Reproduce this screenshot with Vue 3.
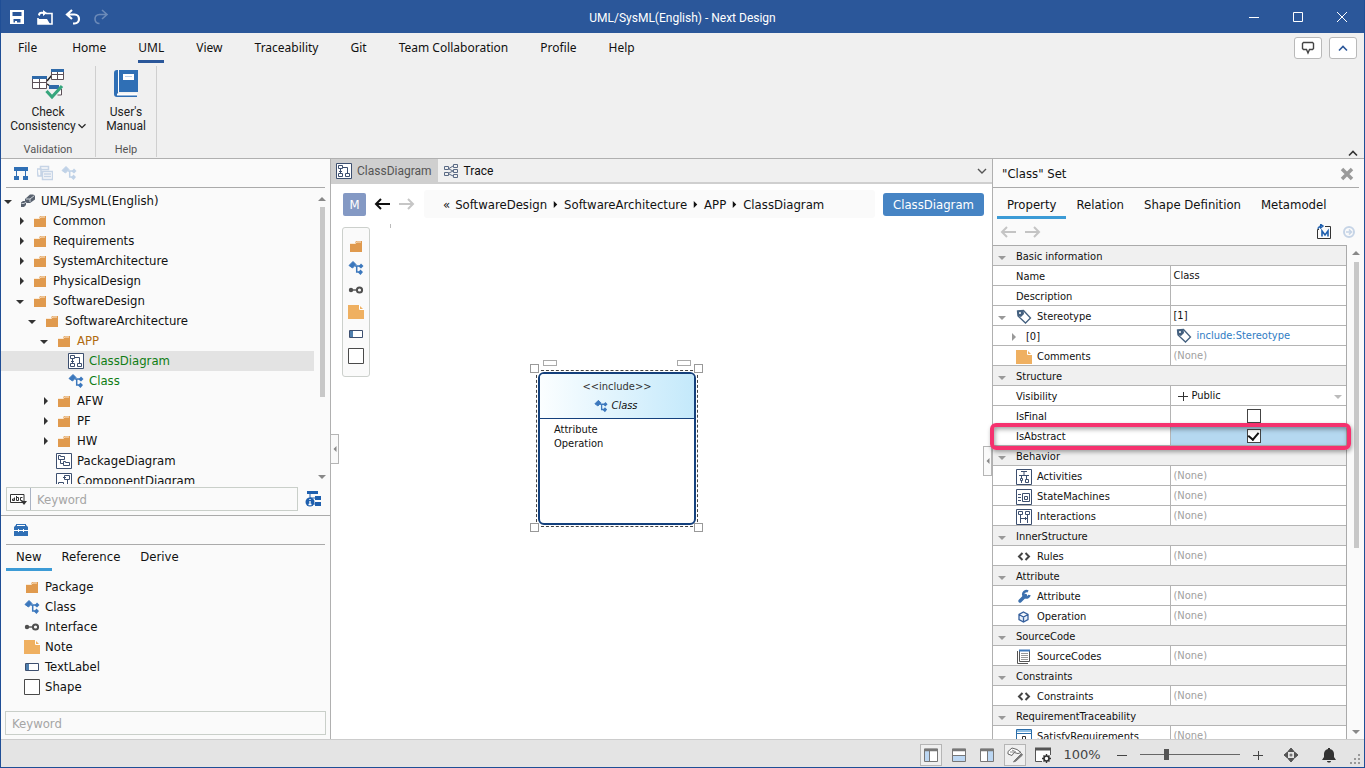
<script setup>
import { ref } from 'vue'

const menus = ['File', 'Home', 'UML', 'View', 'Traceability', 'Git', 'Team Collaboration', 'Profile', 'Help']

const tree = [
  { level: 0, open: true, icon: 'model', label: 'UML/SysML(English)' },
  { level: 1, open: false, icon: 'folder', label: 'Common' },
  { level: 1, open: false, icon: 'folder', label: 'Requirements' },
  { level: 1, open: false, icon: 'folder', label: 'SystemArchitecture' },
  { level: 1, open: false, icon: 'folder', label: 'PhysicalDesign' },
  { level: 1, open: true, icon: 'folder', label: 'SoftwareDesign' },
  { level: 2, open: true, icon: 'folder', label: 'SoftwareArchitecture' },
  { level: 3, open: true, icon: 'folder', label: 'APP', tone: 'brown' },
  { level: 4, icon: 'classdiagram', label: 'ClassDiagram', tone: 'green', selected: true },
  { level: 4, icon: 'class', label: 'Class', tone: 'green' },
  { level: 3, open: false, icon: 'folder', label: 'AFW' },
  { level: 3, open: false, icon: 'folder', label: 'PF' },
  { level: 3, open: false, icon: 'folder', label: 'HW' },
  { level: 3, icon: 'packagediagram', label: 'PackageDiagram' },
  { level: 3, icon: 'componentdiagram', label: 'ComponentDiagram' }
]

const shapes = [
  { icon: 'folder', label: 'Package' },
  { icon: 'class', label: 'Class' },
  { icon: 'interface', label: 'Interface' },
  { icon: 'note', label: 'Note' },
  { icon: 'textlabel', label: 'TextLabel' },
  { icon: 'shape', label: 'Shape' }
]

const crumbs = ['SoftwareDesign', 'SoftwareArchitecture', 'APP', 'ClassDiagram']
const propTabs = ['Property', 'Relation', 'Shape Definition', 'Metamodel']

const props = ref([
  { kind: 'section', label: 'Basic information' },
  { kind: 'text', label: 'Name', value: 'Class' },
  { kind: 'text', label: 'Description', value: '' },
  { kind: 'text', label: 'Stereotype', icon: 'tag', value: '[1]', expander: 'down' },
  { kind: 'link', label: '[0]', value: 'include:Stereotype', expander: 'right' },
  { kind: 'none', label: 'Comments', icon: 'note' },
  { kind: 'section', label: 'Structure' },
  { kind: 'select', label: 'Visibility', id: 'visibility' },
  { kind: 'check', label: 'IsFinal', id: 'is-final', value: false },
  { kind: 'check', label: 'IsAbstract', id: 'is-abstract', value: true, active: true },
  { kind: 'section', label: 'Behavior' },
  { kind: 'none', label: 'Activities', icon: 'activity' },
  { kind: 'none', label: 'StateMachines', icon: 'state' },
  { kind: 'none', label: 'Interactions', icon: 'interaction' },
  { kind: 'section', label: 'InnerStructure' },
  { kind: 'none', label: 'Rules', icon: 'code' },
  { kind: 'section', label: 'Attribute' },
  { kind: 'none', label: 'Attribute', icon: 'wrench' },
  { kind: 'none', label: 'Operation', icon: 'cube' },
  { kind: 'section', label: 'SourceCode' },
  { kind: 'none', label: 'SourceCodes', icon: 'source' },
  { kind: 'section', label: 'Constraints' },
  { kind: 'none', label: 'Constraints', icon: 'code' },
  { kind: 'section', label: 'RequirementTraceability' },
  { kind: 'none', label: 'SatisfyRequirements', icon: 'requirement' }
])

const zoom = ref(25)
</script>

<template>
  <svg class="sprite" aria-hidden="true">
    <symbol id="folder" viewBox="0 0 16 16">
      <path d="M2 5h5l1-2h6v11H2z" fill="#e09a4e" /><path d="M2 5.500h5.500l1-1.500H13" fill="none" stroke="#fbead6" />
    </symbol>
    <symbol id="class" viewBox="0 0 16 16">
      <path d="M5 1.500 8 4.500 4.500 8 1 5.500z" fill="#3c78bd" stroke="#3c78bd" />
      <path d="M7 6h6M8.700 6v6h3" fill="none" stroke="#3c78bd" stroke-width="1.500" />
      <path d="M13 3.500 15.500 6 13 8.500 10.500 6.500zM12.500 9.500 15 12 12.500 15 10 12.500z" fill="#3c78bd" />
    </symbol>
    <symbol id="interface" viewBox="0 0 16 16">
      <circle cx="3" cy="8" r="2.200" fill="#4f4f4f" /><path d="M4 8h5" stroke="#4f4f4f" stroke-width="1.400" />
      <circle cx="11.500" cy="8" r="2.600" fill="none" stroke="#4f4f4f" stroke-width="2" />
    </symbol>
    <symbol id="note" viewBox="0 0 16 16">
      <path d="M0 1h11l5 5v9H0z" fill="#efb061" /><path d="M11.500 1v4.500H16" fill="none" stroke="#fff" />
    </symbol>
    <symbol id="textlabel" viewBox="0 0 16 16">
      <path d="M1.500 4.500h13v7h-13z" fill="#fff" stroke="#3d4f6f" /><path d="M2 5h3v6H2z" fill="#4f7fae" />
    </symbol>
    <symbol id="shape" viewBox="0 0 16 16"><path d="M.5.5h15v15H.5z" fill="#fff" stroke="#4a4a4a" /></symbol>
    <symbol id="model" viewBox="0 0 16 16">
      <path d="M5 6 10 1.500h3l2 1v4L10 10H7L5 9z" fill="#59626f" /><path d="M6 6h4l4.500-3.500M10 6v3" fill="none" stroke="#cdd2d9" />
      <path d="M1 9.500 3 8h3v4l-2 2H1z" fill="#59626f" /><path d="M1.500 10.500h2.500L6 9" fill="none" stroke="#cdd2d9" />
    </symbol>
    <symbol id="classdiagram" viewBox="0 0 16 16">
      <path d="M.5.5h15v15H.5z" fill="#fff" stroke="#3d4f6f" />
      <path d="M2.500 2.500h4v3h-4zM2.500 10.500h4v3h-4zM9.500 10.500h4v3h-4zM4.500 6v4M7 4.500h4.500v6M3 8.500h3" fill="none" stroke="#3d4f6f" />
    </symbol>
    <symbol id="packagediagram" viewBox="0 0 16 16">
      <path d="M.5.5h15v15H.5z" fill="#fff" stroke="#3d4f6f" />
      <path d="M2.500 6.500v-4h2v1h4v3zM7.500 12.500v-4h2v1h4v3zM4.500 7v3.500h3" fill="none" stroke="#3d4f6f" />
    </symbol>
    <symbol id="componentdiagram" viewBox="0 0 16 16">
      <path d="M.5.5h15v15H.5z" fill="#fff" stroke="#3d4f6f" />
      <path d="M8.500 2.500h5v4h-5zM7 4.500h3M11.500 7v4.500H8M2.500 9.500h5v4h-5z" fill="none" stroke="#3d4f6f" />
    </symbol>
    <symbol id="activity" viewBox="0 0 16 16">
      <path d="M.5.5h15v15H.5z" fill="#fff" stroke="#3d4f6f" />
      <path d="M5 2.500h6M3 6.500h10M8 3v3M5.500 7v2M10.500 7v3M4.500 9.500h2v2h-2zM9.500 10.500h3v3h-3zM5.500 12v2" fill="none" stroke="#3d4f6f" />
    </symbol>
    <symbol id="state" viewBox="0 0 16 16">
      <path d="M.5.5h15v15H.5z" fill="#fff" stroke="#3d4f6f" />
      <path d="M2 5.500h3M2 8.500h3M2 11.500h3M6.500 4.500h7v8h-7zM8.500 7.500h3v3h-3z" fill="none" stroke="#3d4f6f" />
    </symbol>
    <symbol id="interaction" viewBox="0 0 16 16">
      <path d="M.5.5h15v15H.5z" fill="#fff" stroke="#3d4f6f" />
      <path d="M2.500 2.500h4v3h-4zM9.500 2.500h4v3h-4zM4.500 6v8M11.500 6v8M5 9.500h6M9.500 8v3" fill="none" stroke="#3d4f6f" />
    </symbol>
    <symbol id="code" viewBox="0 0 16 16"><path d="M6.500 4 3 7.500 6.500 11M9.500 4 13 7.500 9.500 11" fill="none" stroke="#444" stroke-width="2" /></symbol>
    <symbol id="wrench" viewBox="0 0 16 16">
      <path d="M4 12 9.500 6.500" stroke="#3c70ae" stroke-width="3.500" stroke-linecap="round" />
      <path d="M12 2.500A3.200 3.200 0 1 0 13.500 6" fill="none" stroke="#3c70ae" stroke-width="2.500" />
    </symbol>
    <symbol id="cube" viewBox="0 0 16 16">
      <path d="M7.500 3 12 5.500v5L7.500 13 3 10.500v-5zM3 5.500 7.500 8 12 5.500M7.500 8v5" fill="#e7effa" stroke="#355f9c" stroke-width="1.300" />
    </symbol>
    <symbol id="source" viewBox="0 0 16 16">
      <path d="M3.500 1.500h10v11h-10z" fill="#fff" stroke="#555" /><path d="M1.500 2v12.500H12" fill="none" stroke="#555" />
      <path d="M3 1.500h11" stroke="#3c78bd" stroke-width="2" /><path d="M5 4.500h7M5 6.500h7M5 8.500h7M5 10.500h7" stroke="#999" />
    </symbol>
    <symbol id="requirement" viewBox="0 0 16 16">
      <path d="M.5.5h15v15H.5z" fill="#fff" stroke="#2b6ca8" /><path d="M1 1h14v2H1z" fill="#8fc0e6" /><path d="M0 4.500h16" stroke="#2b6ca8" />
      <path d="M6.500 13V7.500h3v3h-3" fill="none" stroke="#333" />
    </symbol>
    <symbol id="tag" viewBox="0 0 16 16">
      <path d="M1.500 2 7.500 1.500 14.500 9 9.500 14 2 7z" fill="#fff" stroke="#44607f" stroke-width="1.300" />
      <path d="M1.500 2 7.500 1.500 8 5 5 8 2 7z" fill="#44607f" /><circle cx="4" cy="4" r="1" fill="#fff" />
    </symbol>
    <symbol id="left" viewBox="0 0 16 16"><path d="M7 3 2 8l5 5M2 8h14" fill="none" stroke="currentColor" stroke-width="2" /></symbol>
    <symbol id="right" viewBox="0 0 16 16"><path d="M9 3l5 5-5 5M14 8H0" fill="none" stroke="currentColor" stroke-width="2" /></symbol>
    <symbol id="chev-up" viewBox="0 0 16 16"><path d="M4 10.500 8 6.500l4 4" fill="none" stroke="currentColor" stroke-width="1.600" /></symbol>
    <symbol id="chev-down" viewBox="0 0 16 16"><path d="M4 6 8 10l4-4" fill="none" stroke="currentColor" stroke-width="1.400" /></symbol>
    <symbol id="tri-up" viewBox="0 0 8 8"><path d="M0 6 4 2l4 4z" fill="currentColor" /></symbol>
    <symbol id="tri-down" viewBox="0 0 8 8"><path d="M0 3h8L4 7z" fill="currentColor" /></symbol>
    <symbol id="tri-right" viewBox="0 0 8 8"><path d="M2 0 6 4 2 8z" fill="currentColor" /></symbol>
    <symbol id="tri-left" viewBox="0 0 8 8"><path d="M6 0 2 4l4 4z" fill="currentColor" /></symbol>
    <symbol id="sidebar" viewBox="0 0 16 16"><path d="M1.500 2h13v12.500h-13z" fill="#fff" stroke="#777" /><path d="M2 4h4v10H2z" fill="#bcd7f3" /><path d="M1 3h14" stroke="#777" stroke-width="2.500" /><path d="M6.500 4v10" stroke="#777" /></symbol>
    <symbol id="bottombar" viewBox="0 0 16 16"><path d="M1.500 2h13v12.500h-13z" fill="#fff" stroke="#777" /><path d="M2 9h12v5H2z" fill="#bcd7f3" /><path d="M1 3h14" stroke="#777" stroke-width="2.500" /><path d="M2 8.500h12" stroke="#777" /></symbol>
    <symbol id="rightbar" viewBox="0 0 16 16"><path d="M1.500 2h13v12.500h-13z" fill="#fff" stroke="#777" /><path d="M9 4h5v10H9z" fill="#bcd7f3" /><path d="M1 3h14" stroke="#777" stroke-width="2.500" /><path d="M8.500 4v10" stroke="#777" /></symbol>
  </svg>

  <div class="window">
    <header class="title">
      <div class="quick">
        <button aria-label="Save"><svg viewBox="0 0 16 16"><path d="M1 1h14v14H1zM3.500 3v4h9V3zM4.500 10v3.500h7V10z" fill="#fff" fill-rule="evenodd" /><path d="M6 12h2v3H6z" fill="#fff" /></svg></button>
        <button aria-label="Open"><svg viewBox="0 0 16 16"><path d="M1 9v6h14V4.500H9" fill="none" stroke="#fff" stroke-width="1.600" /><path d="M1 10h9l3 5H1z" fill="#fff" /><path d="M1 6c0-3 3-4 5-3V1l4 3-4 3V5C4 4.500 3 5 3 7z" fill="#fff" /></svg></button>
        <button aria-label="Undo"><svg viewBox="0 0 16 16"><path d="M7 1 2 5.500 7 10M2 5.500h7.500c6 0 6 9 0 9H8" fill="none" stroke="#fff" stroke-width="2.200" /></svg></button>
        <button aria-label="Redo" class="faded"><svg viewBox="0 0 16 16"><path d="M9 1l5 4.500L9 10M14 5.500H6.500c-6 0-6 9 0 9" fill="none" stroke="#fff" stroke-width="1.600" /></svg></button>
      </div>
      <h1>UML/SysML(English) - Next Design</h1>
      <div class="winbtns">
        <button aria-label="Minimize"><svg viewBox="0 0 16 16"><path d="M3 8.500h10" stroke="#fff" /></svg></button>
        <button aria-label="Maximize"><svg viewBox="0 0 16 16"><path d="M3.500 3.500h9v9h-9z" fill="none" stroke="#fff" /></svg></button>
        <button aria-label="Close"><svg viewBox="0 0 16 16"><path d="m3 3 10 10M13 3 3 13" stroke="#fff" /></svg></button>
      </div>
    </header>

    <section class="ribbon">
      <nav class="menu">
        <button v-for="m in menus" :key="m" :class="{ on: m === 'UML' }">{{ m }}</button>
        <span class="grow"></span>
        <button class="box" aria-label="Feedback"><svg viewBox="0 0 16 16"><path d="M3.500 2.500h9l1 1v5l-1 1H9.500L8 13 6.500 9.500h-3l-1-1v-5z" fill="none" stroke="#444" stroke-width="1.400" /></svg></button>
        <button class="box blue" aria-label="Collapse"><svg><use href="#chev-up" /></svg></button>
      </nav>
      <div class="groups">
        <div class="group wide">
          <button class="tool">
            <svg viewBox="0 0 32 32">
              <path d="m15 13 5-6M15 16l6 4" stroke="#222" stroke-width="1.400" />
              <path d="M.5 8.500h14v12H.5zM.5 14.500h14M7.500 10v10M19.500 1.500h12v10h-12zM19.500 6.500h12M25.500 3v8M29.500 21v6h-4" fill="#fff" stroke="#5c5058" />
              <path d="M0 8h15v3H0zM19 1h13v3H19zM17 17h10v4H17z" fill="#2f6aa9" />
              <path d="m14.500 23 5.500 6 10-11" fill="none" stroke="#36a57c" stroke-width="3.200" />
            </svg>
            <span>Check</span>
            <span class="withchev">Consistency<svg><use href="#chev-down" /></svg></span>
          </button>
          <small>Validation</small>
        </div>
        <div class="group">
          <button class="tool">
            <svg viewBox="0 0 32 32">
              <path d="M4 5a3 3 0 0 1 3-3h21v22H8v3h19v2H7a3 3 0 0 1-3-3z" fill="#2f6fb5" /><path d="M8.500 2v22" stroke="#fff" />
              <path d="M7 25.500h20v2H7z" fill="#fff" /><path d="M13 6h11v6H13z" fill="#fff" /><path d="M15 8.500h7" stroke="#b8cfe8" />
            </svg>
            <span>User's</span>
            <span>Manual</span>
          </button>
          <small>Help</small>
        </div>
        <svg class="fold"><use href="#chev-up" /></svg>
      </div>
    </section>

    <main class="body">
      <aside class="left">
        <div class="bar">
          <svg viewBox="0 0 16 16"><path d="M1 2h14v4H1zM1 11h5v4H1zM10 11h5v4h-5z" fill="#2f6fb5" /><path d="M3.500 6v5M12.500 6v5" stroke="#2f6fb5" /></svg>
          <svg viewBox="0 0 16 16"><path d="M3.500 1.500h8v3h-8zM0 4h4v7H1zM5.500 6.500h10v8h-10zM7 9h7M7 11.500h7" fill="none" stroke="#c6d4e6" stroke-width="1.500" /></svg>
          <svg class="pale"><use href="#class" /></svg>
        </div>
        <div class="treewrap">
          <ul class="tree">
            <li v-for="n in tree" :key="n.label" :class="[n.tone, { sel: n.selected }]" :style="{ paddingLeft: 3 + n.level * 12 + 'px' }">
              <span class="arrow" :class="{ closed: n.open === false }"><svg v-if="n.open !== undefined"><use :href="n.open ? '#tri-down' : '#tri-right'" /></svg></span>
              <svg class="ic"><use :href="'#' + n.icon" /></svg>
              <span>{{ n.label }}</span>
            </li>
          </ul>
          <div class="scroll"><svg><use href="#tri-up" /></svg><i class="thumb"></i><svg><use href="#tri-down" /></svg></div>
        </div>
        <div class="search">
          <div class="field">
            <svg viewBox="0 0 18 14"><path d="M.5 2.500h13.500v8H.5z" fill="#fff" stroke="#333" /><path d="M4.500 5.500v3h-2v-1.500h2M6.500 4v4.500h2v-3h-2M12.500 5.500h-2v3h2" fill="none" stroke="#333" /><path d="M11 9h6l-3 4z" fill="#333" /></svg>
            <input aria-label="Tree keyword" placeholder="Keyword">
          </div>
          <svg viewBox="0 0 16 16"><path d="M2 0h11v3H2zM10 5h6v4h-6zM10 11h6v4h-6z" fill="#1e5fae" /><path d="M5 3v4M5 7h5M6 13h4" stroke="#1e5fae" /><circle cx="5" cy="11" r="4.500" fill="#1e5fae" /><path d="M5 8v1M5 10v4M3.500 13.500h3" stroke="#fff" stroke-width="1.300" /></svg>
        </div>
        <section class="toolbox">
          <div class="bar">
            <svg viewBox="0 0 16 16"><path d="M3 3V2h10v1l2 2v9H1V5z" fill="#2f6fb5" /><path d="M4 3.500h8M1 8.500h4M6 8.500h4M11 8.500h4M5.500 7v3M10.500 7v3" stroke="#fff" /></svg>
          </div>
          <div class="tabs"><button class="on">New</button><button>Reference</button><button>Derive</button></div>
          <ul class="items">
            <li v-for="s in shapes" :key="s.label"><svg class="ic"><use :href="'#' + s.icon" /></svg>{{ s.label }}</li>
          </ul>
          <input class="kw" aria-label="Toolbox keyword" placeholder="Keyword">
        </section>
      </aside>

      <section class="center">
        <div class="doctabs">
          <button class="on"><svg class="ic"><use href="#classdiagram" /></svg>ClassDiagram</button>
          <button><svg class="ic" viewBox="0 0 16 16"><path d="M1.500 3.500h4v3h-4zM1.500 9.500h4v3h-4zM10.500 1.500h4v3h-4zM10.500 6.500h4v3h-4zM10.500 11.500h4v3h-4zM6 5.500l4-2.500M6 11l4 2M6 10l4-2M6 6l4 2" fill="none" stroke="#5a6a85" /></svg>Trace</button>
          <svg class="more"><use href="#chev-down" /></svg>
        </div>
        <div class="crumbbar">
          <button class="m">M</button>
          <button class="nav" aria-label="Back"><svg><use href="#left" /></svg></button>
          <button class="nav off" aria-label="Forward"><svg><use href="#right" /></svg></button>
          <nav class="crumbs">
            <b>«</b>
            <template v-for="(c, i) in crumbs" :key="c">
              <svg v-if="i"><use href="#tri-right" /></svg><a href="#">{{ c }}</a>
            </template>
          </nav>
          <button class="kind">ClassDiagram</button>
        </div>
        <div class="canvas">
          <div class="palette">
            <button v-for="s in shapes" :key="s.label" :aria-label="s.label"><svg class="ic"><use :href="'#' + s.icon" /></svg></button>
          </div>
          <i class="tick"></i>
          <div class="node">
            <i class="ear e1"></i><i class="ear e2"></i>
            <i class="grip g1"></i><i class="grip g2"></i><i class="grip g3"></i><i class="grip g4"></i>
            <div class="card">
              <div class="head"><span>&lt;&lt;include&gt;&gt;</span><em><svg><use href="#class" /></svg>Class</em></div>
              <div class="members"><span>Attribute</span><span>Operation</span></div>
            </div>
          </div>
        </div>
        <button class="side s1" aria-label="Collapse left panel"><svg><use href="#tri-left" /></svg></button>
        <button class="side s2" aria-label="Collapse right panel"><svg><use href="#tri-left" /></svg></button>
      </section>

      <aside class="right">
        <div class="phead"><span>"Class" Set</span><button aria-label="Close panel"><svg viewBox="0 0 16 16"><path d="m3 3 10 10M13 3 3 13" stroke="#9a9a9a" stroke-width="3.500" /></svg></button></div>
        <div class="tabs"><button v-for="t in propTabs" :key="t" :class="{ on: t === 'Property' }">{{ t }}</button></div>
        <div class="pnav">
          <svg><use href="#left" /></svg><svg><use href="#right" /></svg>
          <span class="grow"></span>
          <svg viewBox="0 0 16 16"><path d="M3 5.500H1.500v9h13v-12H9" fill="none" stroke="#333" /><path d="M2 5c0-3 2-3 4-3M4.500 0v4.500L7.500 2z" fill="#1e5fae" stroke="#1e5fae" /><path d="M6 12.500V7l3 4 3-4v5.500" fill="none" stroke="#1e5fae" stroke-width="1.600" /></svg>
          <svg viewBox="0 0 16 16"><circle cx="8" cy="8" r="5" fill="none" stroke="#c6d4e6" stroke-width="2" /><path d="M5 8h5M8 5.500 10.500 8 8 10.500" fill="none" stroke="#c6d4e6" stroke-width="1.600" /></svg>
        </div>
        <div class="grid">
          <div class="tablewrap">
            <table>
              <tbody>
                <tr v-for="(p, i) in props" :key="i" :class="[p.kind, { active: p.active }]">
                  <th :colspan="p.kind === 'section' ? 2 : 1" scope="row">
                    <div class="cell">
                      <span class="exp" :class="{ deep: p.expander === 'right' }">
                        <svg v-if="p.kind === 'section' || p.expander"><use :href="p.expander === 'right' ? '#tri-right' : '#tri-down'" /></svg>
                      </span>
                      <svg v-if="p.icon" class="ic"><use :href="'#' + p.icon" /></svg>
                      <label v-if="p.id" :for="p.id">{{ p.label }}</label>
                      <span v-else>{{ p.label }}</span>
                    </div>
                  </th>
                  <td v-if="p.kind !== 'section'">
                    <div class="cell value">
                      <template v-if="p.kind === 'none'">(None)</template>
                      <a v-else-if="p.kind === 'link'" href="#"><svg class="ic"><use href="#tag" /></svg>{{ p.value }}</a>
                      <template v-else-if="p.kind === 'select'">
                        <svg class="plus" viewBox="0 0 10 10"><path d="M0 5.500h10M5.500 1v9" stroke="#333" /></svg>
                        <select :id="p.id"><option>Public</option></select>
                        <svg class="drop"><use href="#tri-down" /></svg>
                      </template>
                      <input v-else-if="p.kind === 'check'" :id="p.id" v-model="p.value" type="checkbox">
                      <template v-else>{{ p.value }}</template>
                    </div>
                  </td>
                </tr>
              </tbody>
            </table>
          </div>
          <div class="scroll"><svg><use href="#tri-up" /></svg><i class="thumb"></i><svg><use href="#tri-down" /></svg></div>
        </div>
        <div class="mark"></div>
      </aside>
    </main>

    <footer class="status">
      <button class="boxed" aria-label="Left pane"><svg><use href="#sidebar" /></svg></button>
      <button aria-label="Bottom pane"><svg><use href="#bottombar" /></svg></button>
      <button aria-label="Right pane"><svg><use href="#rightbar" /></svg></button>
      <button class="boxed" aria-label="Inspector"><svg viewBox="0 0 16 16"><path d="M1 4.500 5 1l5 1.500 4 3-3 1-4-1-2 3L1 7z" fill="#fff" stroke="#666" /><path d="M3 5h4M5 3l4 2" stroke="#888" /><path d="M14.500 6.500 8 13l-1.500 2 2.500-1 6.500-6z" fill="#777" stroke="#777" /></svg></button>
      <button aria-label="View settings"><svg viewBox="0 0 16 16"><path d="M7 14.500H.5v-13h15V8" fill="#fff" stroke="#555" /><path d="M0 2h16" stroke="#555" stroke-width="3" /><circle cx="11.500" cy="11.500" r="2.500" fill="#fff" stroke="#333" stroke-width="1.600" /><path d="M11.500 7v2M11.500 14v2M7 11.500h2M14 11.500h2M8.500 8.500l1 1M13.500 13.500l1 1M8.500 14.500l1-1M13.500 9.500l1-1" stroke="#333" stroke-width="1.400" /></svg></button>
      <output for="zoom">100%</output>
      <button class="zb" aria-label="Zoom out"><svg viewBox="0 0 16 16"><path d="M3 8.500h10" stroke="#444" /></svg></button>
      <input id="zoom" v-model="zoom" type="range" min="0" max="100" aria-label="Zoom">
      <button class="zb" aria-label="Zoom in"><svg viewBox="0 0 16 16"><path d="M3 8.500h10M8.500 4v9" stroke="#444" /></svg></button>
      <button class="fit" aria-label="Fit"><svg viewBox="0 0 16 16"><path d="M8 1l3 3.500H5zM8 15l3-3.500H5zM1 8l3.500-3v6zM15 8l-3.500-3v6z" fill="#555" stroke="#555" /><circle cx="8" cy="8" r="1.500" fill="#777" /></svg></button>
      <button class="bell" aria-label="Notifications"><svg viewBox="0 0 16 16"><path d="M7 1h2v1c3 .5 4 3 4 5v3l2 3H1l2-3V7c0-2 1-4.500 4-5zM6 14h4c0 2-4 2-4 0z" fill="#333" /></svg></button>
      <svg class="corner" viewBox="0 0 12 12"><path d="M9 1h2v2H9zM5 5h2v2H5zM9 5h2v2H9zM1 9h2v2H1zM5 9h2v2H5zM9 9h2v2H9z" fill="#999" /></svg>
    </footer>
  </div>
</template>

<style>
html, body { margin: 0; }
</style>

<style scoped>
* { box-sizing: border-box; }
.sprite { position: absolute; width: 0; height: 0; }
.window { height: 100vh; display: flex; flex-direction: column; border: 1px solid #1f4e96; border-top: 0; background: #fff; color: #111; font: 12px "Noto Sans", sans-serif; overflow: hidden; }
button { border: 0; background: none; padding: 0; margin: 0; font: inherit; color: inherit; display: flex; align-items: center; justify-content: center; }
svg { width: 16px; height: 16px; flex: none; display: block; }
ul { list-style: none; margin: 0; padding: 0; }
input, select { font: inherit; color: inherit; }
a { color: inherit; text-decoration: none; }
.grow { flex: 1; }

.title { flex: none; height: 33px; background: #2b579a; color: #fff; display: grid; grid-template-columns: 1fr auto 1fr; align-items: center; margin: 0 -1px; }
.quick { display: flex; gap: 12px; padding-left: 9px; }
.faded { opacity: .3; }
h1 { margin: 0; padding-top: 2px; font: 12px Roboto, sans-serif; }
.winbtns { display: flex; gap: 28px; justify-content: flex-end; padding-right: 15px; }

.ribbon { flex: none; height: 126px; background: #f0f0f0; border-bottom: 1px solid #b0b0b0; display: flex; flex-direction: column; }
.menu { display: flex; height: 30px; padding: 0 7px 0 17px; gap: 32px; flex: none; }
.menu button:not(.box) { border-bottom: 3px solid transparent; padding-top: 2px; }
.menu button:first-child { margin-right: 3px; }
.menu button.on { border-color: #2b579a; }
.menu .box { width: 28px; height: 22px; margin-top: 4px; background: #fff; border: 1px solid #b9b9b9; border-radius: 3px; color: #2b579a; }
.menu .box + .box { margin-left: -25px; }
.groups { display: flex; flex: 1; }
.group { width: 61px; border-right: 1px solid #cfcfcf; margin: 3px 0 4px; padding-top: 2px; display: flex; flex-direction: column; align-items: center; }
.group.wide { width: 95px; }
.tool { flex-direction: column; font: 12px/14px Roboto, sans-serif; color: #222; }
.tool > svg { width: 32px; height: 32px; margin: 0 0 5px; }
.withchev { display: flex; align-items: center; }
.withchev svg { margin: 0 -4px 0 -2px; height: 14px; }
small { font: 11px/14px Roboto, sans-serif; color: #555; margin-top: 10px; }
.fold { margin: auto 3px 0 auto; color: #333; }

.body { flex: 1; min-height: 0; display: flex; }
.left, .right { background: #fafafa; display: flex; flex-direction: column; font: 13px/20px "DejaVu Sans Condensed", "DejaVu Sans", sans-serif; min-height: 0; }
.left { width: 330px; flex: none; border-right: 1px solid #b0b0b0; }
.bar { display: flex; align-items: center; height: 29px; flex: none; gap: 8px; margin: 0 5px; padding-left: 7px; border-bottom: 1px solid #aaa; }
.pale { opacity: .3; }
.treewrap { flex: 1; min-height: 0; display: flex; overflow: hidden; padding-top: 3px; margin-bottom: 3px; }
.tree { flex: 1; margin-right: 4px; }
.tree li { display: flex; align-items: center; height: 20px; white-space: nowrap; }
.tree li.sel { background: #e3e3e3; }
.brown { color: #b06a10; }
.green { color: #0f7d14; }
.arrow { width: 10px; margin-right: 6px; color: #333; }
.arrow.closed { padding-left: 2px; }
.arrow svg { width: 8px; height: 8px; }
.tree .ic { margin-right: 5px; }
.scroll { width: 8px; flex: none; margin-right: 4px; display: flex; flex-direction: column; align-items: center; color: #888; padding: 4px 0; }
.scroll svg { width: 8px; height: 8px; }
.scroll .thumb { width: 5px; background: #c8c8c8; margin: 4px 0 auto; height: 190px; }
.search { display: flex; align-items: center; height: 28px; flex: none; padding: 0 9px 4px 5px; gap: 7px; }
.field { flex: 1; height: 24px; border: 1px solid #c9cfc9; display: flex; align-items: center; padding-left: 3px; }
.field svg { width: 18px; height: 14px; }
.field input { flex: 1; min-width: 0; height: 22px; border: 0; border-left: 1px solid #aab3c4; background: none; margin-left: 2px; padding: 0 6px; }
input::placeholder { color: #a5a5a5; opacity: 1; }
.toolbox { flex: none; border-top: 1px solid #aaa; display: flex; flex-direction: column; }
.tabs { display: flex; padding-left: 5px; flex: none; }
.tabs button { height: 26px; padding: 0 10px; border-bottom: 3px solid transparent; }
.tabs button.on { border-color: #3c9bd6; }
.items { padding: 6px 0 0 23px; margin-bottom: 14px; }
.items li { display: flex; align-items: center; gap: 5px; height: 20px; }
.kw { height: 24px; margin: 0 4px 4px; border: 1px solid #c9cfc9; background: none; padding: 0 6px; }

.center { flex: 1; min-width: 0; display: flex; flex-direction: column; position: relative; background: #fff; }
.doctabs { display: flex; height: 25px; flex: none; background: #f0f0f0; border-bottom: 2px solid #cfcfcf; font: 12px Roboto, sans-serif; }
.doctabs button { padding: 1px 6px 0 5px; gap: 5px; }
.doctabs .on { background: #cfcfcf; color: #555; }
.more { margin: 4px 2px 0 auto; color: #555; }
.crumbbar { display: flex; align-items: center; height: 40px; flex: none; padding: 0 8px 0 12px; font: 13px "DejaVu Sans Condensed", "DejaVu Sans", sans-serif; }
.m { width: 23px; height: 23px; background: #8499c4; color: #fff; border-radius: 2px; margin-right: 8px; }
.nav { margin-right: 9px; }
.off { color: #c6c6c6; }
.crumbs { flex: 1; height: 28px; background: #fafafa; border-radius: 3px; display: flex; align-items: center; gap: 5px; padding-left: 19px; margin-right: 8px; }
.crumbs svg { width: 7px; height: 7px; }
.crumbs b { font-weight: 400; }
.kind { height: 23px; background: #4684c4; color: #fff; border-radius: 3px; padding: 0 10px; }
.canvas { flex: 1; position: relative; }
.palette { position: absolute; left: 11px; top: 3px; width: 28px; height: 150px; background: #fafafa; border: 1px solid #ccd0cc; border-radius: 3px; display: flex; flex-direction: column; align-items: center; padding-top: 10px; gap: 6px; }
.tick { position: absolute; left: 59px; top: 0; width: 1px; height: 4px; background: #bbb; }
.node { position: absolute; left: 205px; top: 146px; width: 162px; height: 157px; border: 1px dashed #444; padding: 1px; }
.card { height: 100%; border: 2px solid #14407c; border-radius: 6px; overflow: hidden; background: #fff; font: 11px/14px "DejaVu Sans Condensed", "DejaVu Sans", sans-serif; }
.head { height: 45px; border-bottom: 1px solid #14407c; background: linear-gradient(90deg, #fbfeff, #c4e9fb); display: flex; flex-direction: column; align-items: center; padding-top: 6px; gap: 5px; color: #333; }
.head em { display: flex; align-items: center; gap: 3px; color: #111; padding-right: 2px; }
.head svg { width: 14px; height: 14px; }
.members { display: flex; flex-direction: column; padding: 4px 14px; }
.grip { position: absolute; width: 9px; height: 9px; background: #fff; border: 1px solid #999; }
.g1 { left: -7px; top: -7px; } .g2 { right: -6px; top: -7px; } .g3 { left: -7px; bottom: -6px; } .g4 { right: -6px; bottom: -6px; }
.ear { position: absolute; top: -11px; width: 14px; height: 6px; border: 1px solid #aaa; }
.e1 { left: 6px; } .e2 { right: 6px; }
.side { position: absolute; width: 9px; height: 30px; background: #fafafa; border: 1px solid #b5b5b5; color: #888; }
.side svg { width: 6px; height: 6px; }
.s1 { left: -1px; top: 275px; } .s2 { right: 0; top: 287px; }

.right { width: 372px; flex: none; border-left: 1px solid #b0b0b0; position: relative; }
.phead { height: 29px; flex: none; display: flex; align-items: center; justify-content: space-between; margin-right: 5px; padding: 1px 4px 0 9px; border-bottom: 1px solid #aaa; }
.right .tabs { height: 31px; padding-left: 4px; }
.right .tabs button { height: 31px; padding-top: 5px; }
.pnav { height: 26px; flex: none; display: flex; align-items: center; gap: 9px; padding: 0 7px; color: #c4c4c4; }
.grid { flex: 1; min-height: 0; overflow: hidden; display: flex; }
.tablewrap { flex: 1; min-width: 0; overflow: hidden; }
table { width: 100%; table-layout: fixed; border-collapse: separate; border-spacing: 0; border-top: 1px solid #aaa; border-right: 1px solid #aaa; background: #fff; font: 11px/19px "DejaVu Sans Condensed", "DejaVu Sans", sans-serif; }
th, td { padding: 0; border-bottom: 1px solid #b4b4b4; height: 20px; text-align: left; font-weight: 400; }
td { border-left: 1px solid #b4b4b4; }
.section th { background: #f0f0f0; }
.cell { display: flex; align-items: center; height: 19px; white-space: nowrap; }
th .cell { padding-top: 2px; }
.exp { width: 23px; padding-left: 5px; color: #999; }
.exp.deep { width: 33px; padding-left: 17px; }
.exp svg { width: 8px; height: 8px; }
th .ic { margin-right: 5px; }
.value { padding: 0 4px 0 3px; }
.check .value { padding-right: 12px; }
.none .value { color: #a0a0a0; }
.value a { display: flex; align-items: center; gap: 5px; color: #2f7cc4; padding-left: 2px; }
.plus { width: 10px; height: 10px; margin: 0 4px; }
select { appearance: none; border: 0; background: none; flex: 1; padding: 0; }
.drop { width: 8px; height: 8px; color: #bbb; }
input[type=checkbox] { appearance: none; width: 14px; height: 14px; margin: 0 auto; border: 1px solid #444; background: #fff; display: grid; place-items: center; }
input[type=checkbox]:checked::after { content: ""; width: 5px; height: 8px; border: solid #111; border-width: 0 2px 2px 0; transform: translateY(-1px) rotate(40deg); }
.active td { background: #b5d8f0; }
.grid .scroll { width: 13px; margin-right: 4px; padding-left: 5px; }
.grid .thumb { height: 286px; margin-top: 5px; }
.mark { position: absolute; left: -3px; top: 264px; right: 13px; height: 27px; border: 4px solid #f5316e; border-radius: 6px; box-shadow: 1px 2px 4px rgba(0, 0, 0, .35), inset 1px 2px 5px rgba(0, 0, 0, .4); pointer-events: none; }

.status { flex: none; height: 28px; background: #e4e4e4; border-top: 1px solid #ccc; display: flex; align-items: center; justify-content: flex-end; padding: 2px 3px 0 0; gap: 6px; color: #444; }
.status button { width: 22px; height: 22px; }
.status .boxed { border: 1px solid #b5b5b5; background: #efefef; }
output { font: 13px "DejaVu Sans", sans-serif; width: 44px; text-align: center; }
.status .zb { width: 16px; margin: 0 4px; }
#zoom { appearance: none; width: 100px; height: 14px; margin: 0; background: linear-gradient(#666, #666) center / 100% 1px no-repeat; }
#zoom::-webkit-slider-thumb { appearance: none; width: 5px; height: 11px; background: #555; }
.fit { margin-left: 4px; }
.bell { margin: 0 3px 0 10px; }
.corner { width: 12px; height: 12px; align-self: flex-end; margin-bottom: 2px; }
</style>
